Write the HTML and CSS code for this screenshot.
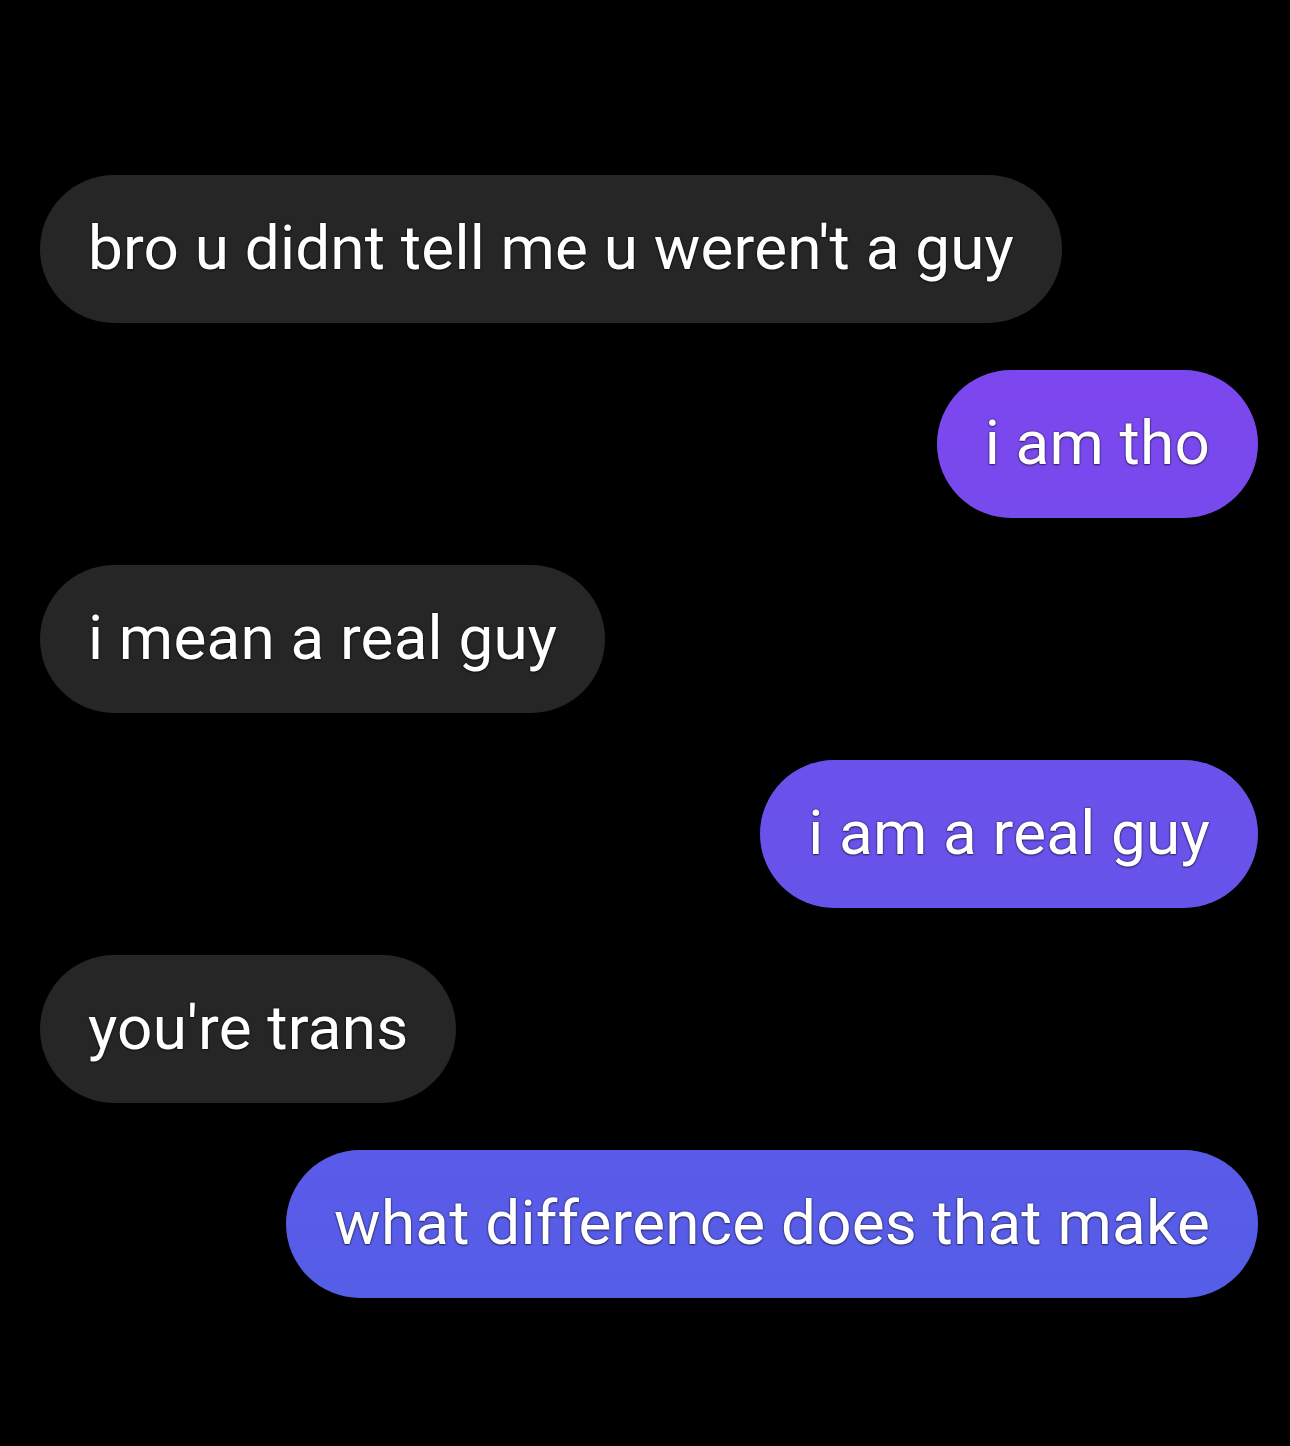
FILE: index.html
```html
<!DOCTYPE html>
<html lang="en">
<head>
<meta charset="utf-8">
<title>Chat</title>
<link rel="stylesheet" href="styles.css">
</head>
<body>
<main class="chat">
  <div class="msg msg-in"><span class="bubble">bro u didnt tell me u weren't a guy</span></div>
  <div class="msg msg-out"><span class="bubble">i am tho</span></div>
  <div class="msg msg-in"><span class="bubble">i mean a real guy</span></div>
  <div class="msg msg-out"><span class="bubble">i am a real guy</span></div>
  <div class="msg msg-in"><span class="bubble">you're trans</span></div>
  <div class="msg msg-out"><span class="bubble">what difference does that make</span></div>
</main>
</body>
</html>
```

FILE: styles.css
```css
html, body {
  margin: 0;
  padding: 0;
  background: #000;
}
body {
  width: 1290px;
  height: 1446px;
  overflow: hidden;
  font-family: Roboto, "Noto Sans", sans-serif;
}
.chat {
  display: flex;
  flex-direction: column;
  gap: 47px;
  padding: 175px 32px 0 40px;
}
.msg {
  display: flex;
}
.msg-in { justify-content: flex-start; }
.msg-out { justify-content: flex-end; }
.bubble {
  display: flex;
  align-items: center;
  height: 148px;
  box-sizing: border-box;
  padding: 0 48px 2px 48px;
  border-radius: 74px;
  font-size: 62px;
  line-height: 1;
  letter-spacing: 0.2px;
  color: #fff;
  white-space: nowrap;
  text-shadow: 0 0 2px rgba(0,0,0,0.7), 0 1px 2px rgba(0,0,0,0.5);
}
.msg-in .bubble {
  background: #262626;
}
.msg-out .bubble {
  background: linear-gradient(180deg, #8d3df1 0px, #4e62e6 1446px) fixed;
}
```
